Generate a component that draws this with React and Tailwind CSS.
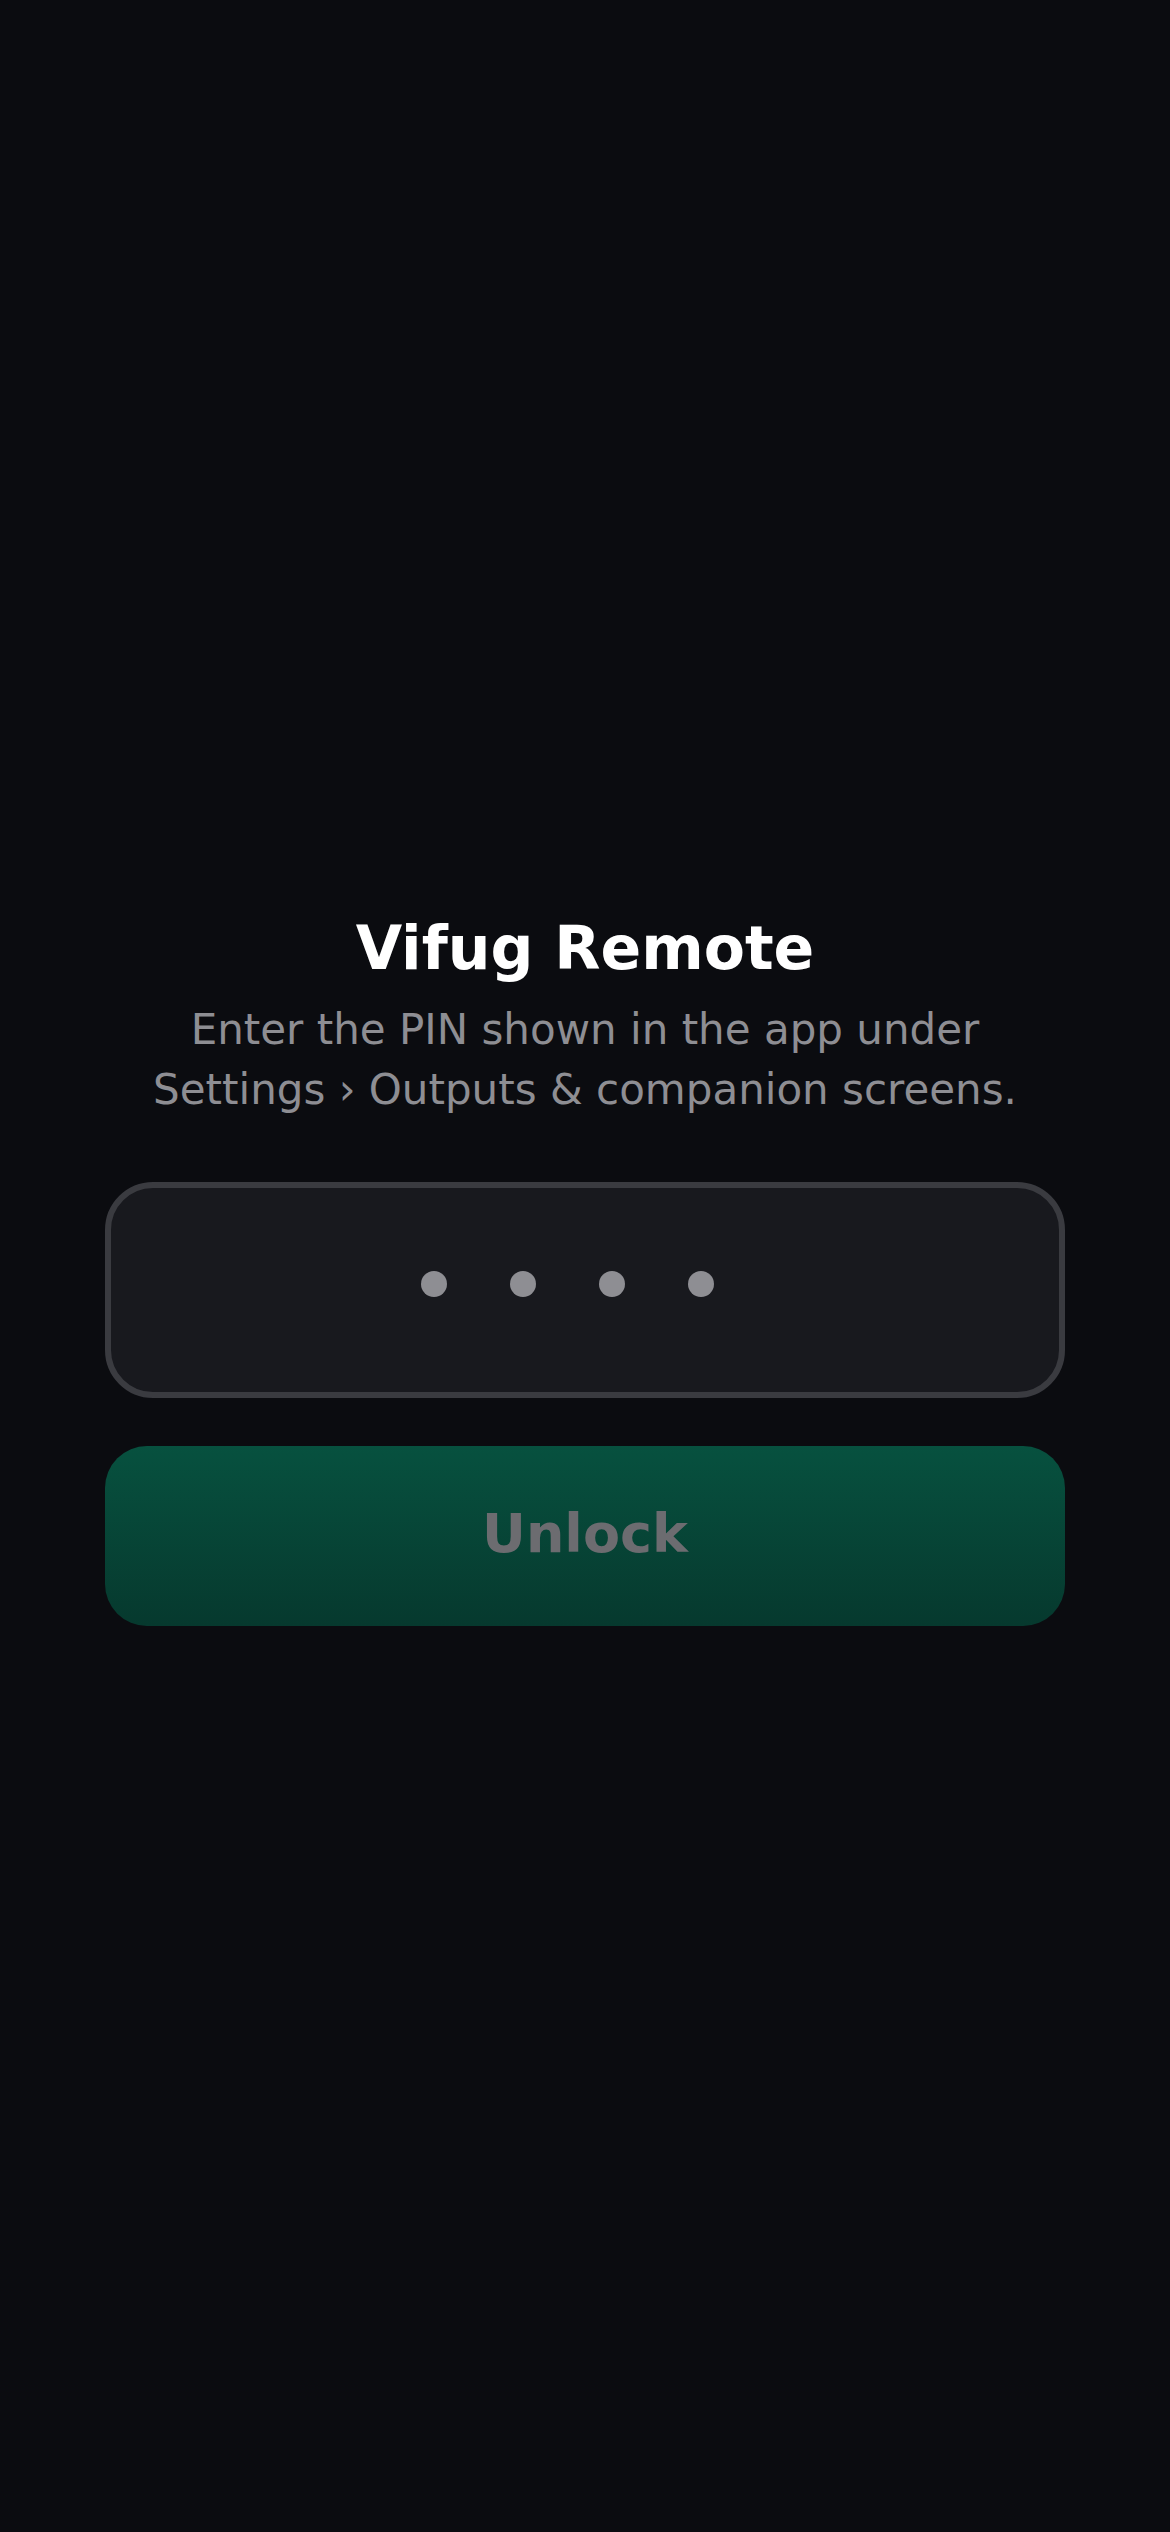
import React from "react";

export default function App() {
  return (
    <div
      className="min-h-screen w-full bg-[#0b0c10] flex items-center justify-center"
      style={{ fontFamily: '"DejaVu Sans", Verdana, sans-serif' }}
    >
      <div className="w-[960px] flex flex-col items-center">
        <h1 className="text-[60px] leading-[84px] font-bold text-white text-center">
          Vifug Remote
        </h1>
        <p className="mt-[10px] text-[42px] leading-[60px] text-[#8e8e93] text-center">
          Enter the PIN shown in the app under
          <br />
          Settings › Outputs &amp; companion screens.
        </p>
        <div className="mt-[62px] w-full h-[216px] rounded-[48px] border-[6px] border-[#3a3b40] bg-[#18191e] flex items-center justify-center">
          <div className="flex items-center gap-[63px] -mt-[12px] -ml-[36px]">
            <span className="block w-[26px] h-[26px] rounded-full bg-[#8e8e93]" />
            <span className="block w-[26px] h-[26px] rounded-full bg-[#8e8e93]" />
            <span className="block w-[26px] h-[26px] rounded-full bg-[#8e8e93]" />
            <span className="block w-[26px] h-[26px] rounded-full bg-[#8e8e93]" />
          </div>
        </div>
        <button
          type="button"
          className="mt-[48px] w-full h-[180px] rounded-[42px] bg-gradient-to-b from-[#07513f] to-[#06392e] flex items-center justify-center"
        >
          <span className="-mt-[5px] text-[54px] leading-none font-bold text-[#6c6c70]">Unlock</span>
        </button>
      </div>
    </div>
  );
}
